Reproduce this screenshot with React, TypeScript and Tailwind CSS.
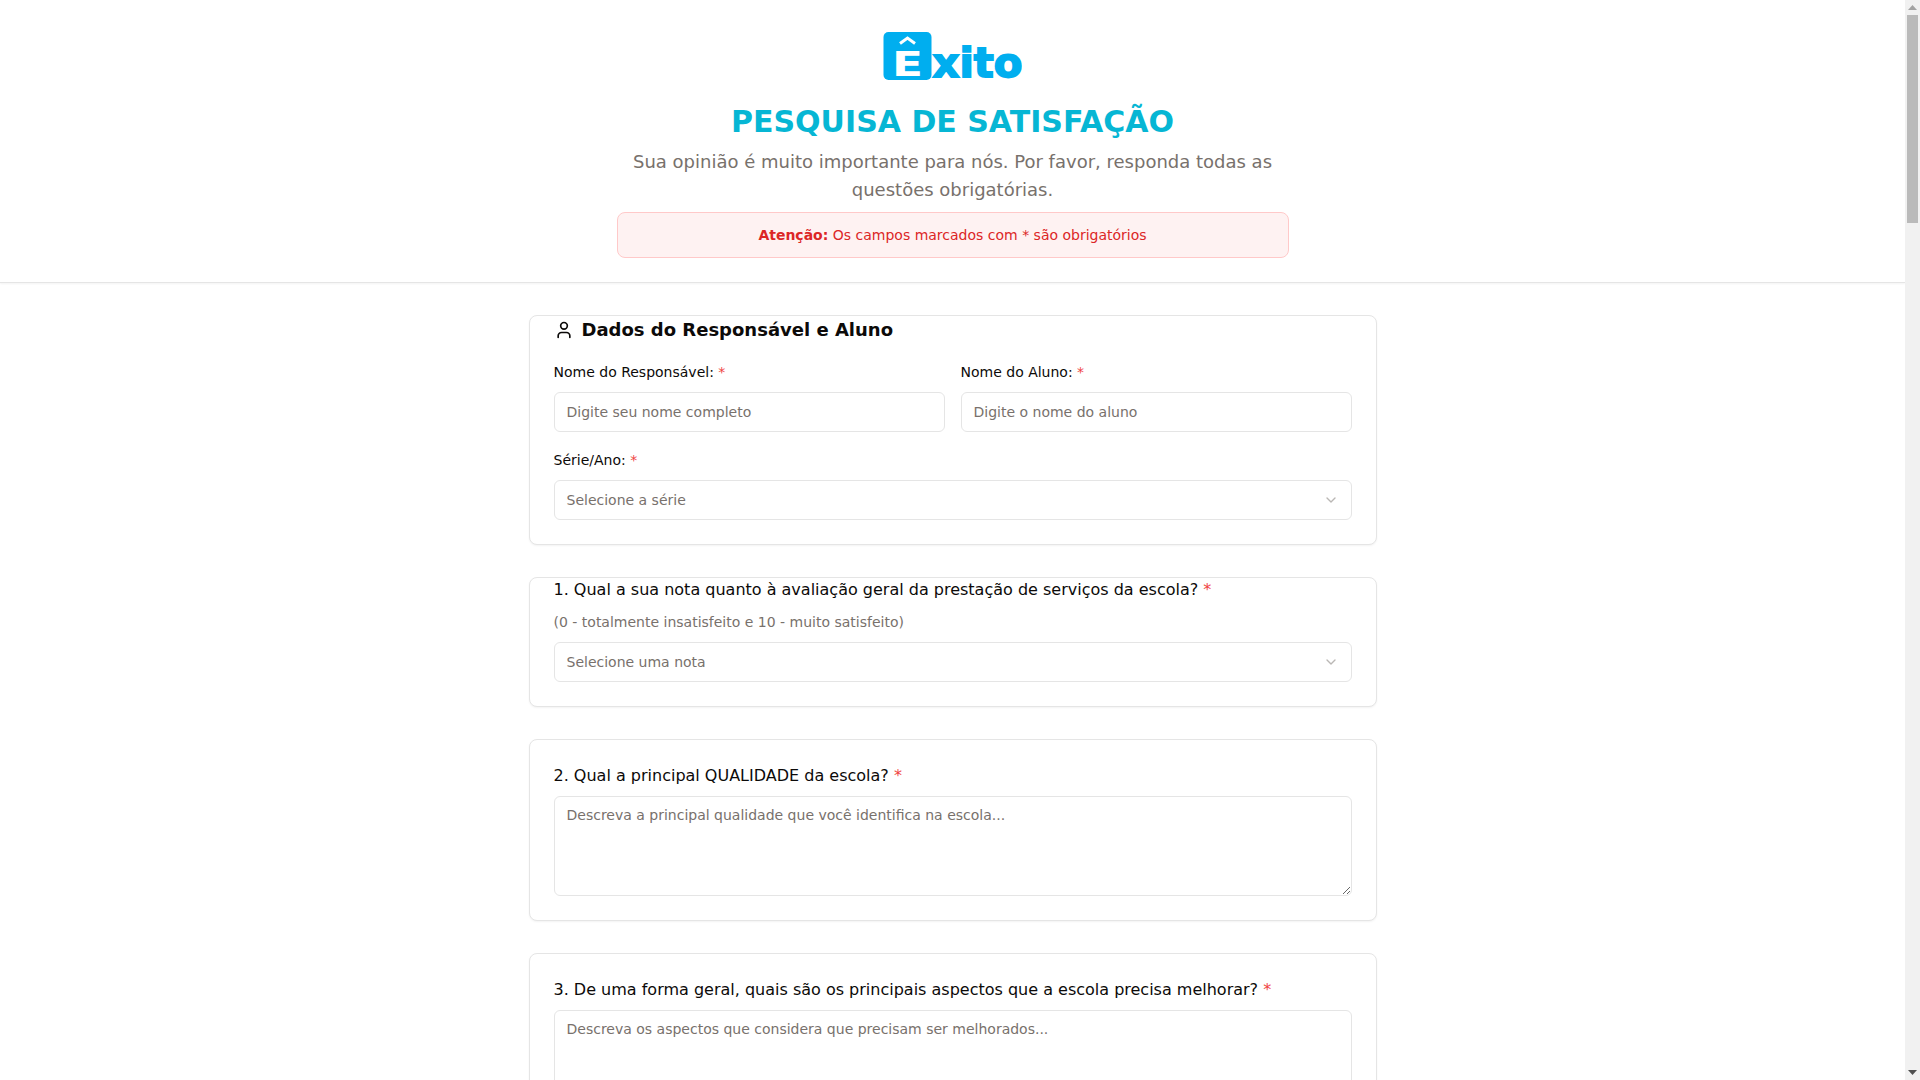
import { ChevronDown, User } from 'lucide-react'
import type { ReactNode } from 'react'

const FONT = "font-['DejaVu_Sans',sans-serif]"

function Star() {
  return <span className="text-[#ef4444]"> *</span>
}

function Card({ children, tight }: { children: ReactNode; tight?: boolean }) {
  return (
    <section
      className={`mb-8 rounded-lg border border-[#e5e5e5] bg-white px-6 pb-6 shadow-[0_1px_2px_rgba(0,0,0,0.05)] ${tight ? '' : 'pt-6'}`}
    >
      {children}
    </section>
  )
}

function TextInput({ placeholder }: { placeholder: string }) {
  return (
    <input
      placeholder={placeholder}
      className="block h-10 w-full rounded-md border border-[#e5e5e5] bg-white px-3 text-sm placeholder:text-[#78716c] outline-none"
    />
  )
}

function SelectBox({ placeholder }: { placeholder: string }) {
  return (
    <button
      type="button"
      className="flex h-10 w-full items-center justify-between rounded-md border border-[#e5e5e5] bg-white px-3 text-sm text-[#78716c]"
    >
      <span>{placeholder}</span>
      <ChevronDown className="h-4 w-4 opacity-50" />
    </button>
  )
}

function TextArea({ placeholder }: { placeholder: string }) {
  return (
    <textarea
      placeholder={placeholder}
      className="block h-[100px] w-full rounded-md border border-[#e5e5e5] bg-white px-3 py-2 text-sm placeholder:text-[#78716c] outline-none"
    />
  )
}

function Logo() {
  return (
    <svg width="139" height="56" viewBox="0 0 139 56" className="mx-auto block">
      <rect x="0.5" y="0" width="48" height="48" rx="5" fill="#00aeef" />
      <polyline points="17,11.5 24.5,6 32,11.5" fill="none" stroke="#fff" strokeWidth="3" />
      <text
        x="9"
        y="44"
        fontFamily="DejaVu Sans"
        fontWeight="700"
        fontSize="34"
        fill="#fff"
        textLength="31"
        lengthAdjust="spacingAndGlyphs"
      >
        E
      </text>
      <text
        x="49.5"
        y="45"
        fontFamily="DejaVu Sans"
        fontWeight="700"
        fontSize="41"
        fill="#00aeef"
        stroke="#00aeef"
        strokeWidth="1.8"
        textLength="90"
        lengthAdjust="spacingAndGlyphs"
      >
        xito
      </text>
    </svg>
  )
}

function ScrollbarStrip() {
  return (
    <div className="flex w-[15px] shrink-0 flex-col items-center justify-between bg-[#f1f1f1]">
      <div className="flex w-full flex-col items-center">
        <div className="flex h-[15px] items-center justify-center">
          <svg width="9" height="5" viewBox="0 0 9 5">
            <polygon points="4.5,0 9,5 0,5" fill="#a3a3a3" />
          </svg>
        </div>
        <div className="h-[208px] w-[11px] bg-[#bababa]" />
      </div>
      <div className="flex h-[15px] items-center justify-center">
        <svg width="9" height="5" viewBox="0 0 9 5">
          <polygon points="0,0 9,0 4.5,5" fill="#505050" />
        </svg>
      </div>
    </div>
  )
}

export default function App() {
  return (
    <div className={`${FONT} flex h-screen overflow-hidden bg-white text-[#0c0a09]`}>
      <div className="min-w-0 flex-1">
        {/* Cabeçalho */}
        <header className="border-b border-[#e5e5e5] px-6 pb-6 pt-8 text-center shadow-[0_1px_2px_rgba(0,0,0,0.05)]">
          <Logo />
          <h1 className="mt-4 text-3xl font-bold tracking-normal text-[#06b6d4]">PESQUISA DE SATISFAÇÃO</h1>
          <p className="mx-auto mt-2 max-w-2xl text-lg text-[#78716c]">
            Sua opinião é muito importante para nós. Por favor, responda todas as questões obrigatórias.
          </p>
          <div className="mx-auto mt-2 max-w-2xl rounded-lg border border-red-200 bg-red-50 p-3 text-sm text-[#dc2626]">
            <strong>Atenção:</strong> Os campos marcados com * são obrigatórios
          </div>
        </header>

        <main className="mx-auto max-w-4xl px-6 py-8">
          <Card tight>
            <h2 className="flex h-7 items-center gap-2 text-lg font-semibold">
              <User className="h-5 w-5" />
              Dados do Responsável e Aluno
            </h2>
            <div className="mt-[18px] grid grid-cols-2 gap-4">
              <div>
                <label className="mb-2.5 block text-sm">
                  Nome do Responsável:
                  <Star />
                </label>
                <TextInput placeholder="Digite seu nome completo" />
              </div>
              <div>
                <label className="mb-2.5 block text-sm">
                  Nome do Aluno:
                  <Star />
                </label>
                <TextInput placeholder="Digite o nome do aluno" />
              </div>
            </div>
            <label className="mb-2.5 mt-[18px] block text-sm">
              Série/Ano:
              <Star />
            </label>
            <SelectBox placeholder="Selecione a série" />
          </Card>

          <Card tight>
            <p className="text-base">
              1. Qual a sua nota quanto à avaliação geral da prestação de serviços da escola?
              <Star />
            </p>
            <p className="my-2.5 text-sm text-[#78716c]">(0 - totalmente insatisfeito e 10 - muito satisfeito)</p>
            <SelectBox placeholder="Selecione uma nota" />
          </Card>

          <Card>
            <p className="mb-2 text-base">
              2. Qual a principal QUALIDADE da escola?
              <Star />
            </p>
            <TextArea placeholder="Descreva a principal qualidade que você identifica na escola..." />
          </Card>

          <Card>
            <p className="mb-2 text-base">
              3. De uma forma geral, quais são os principais aspectos que a escola precisa melhorar?
              <Star />
            </p>
            <TextArea placeholder="Descreva os aspectos que considera que precisam ser melhorados..." />
          </Card>
        </main>
      </div>
      <ScrollbarStrip />
    </div>
  )
}
